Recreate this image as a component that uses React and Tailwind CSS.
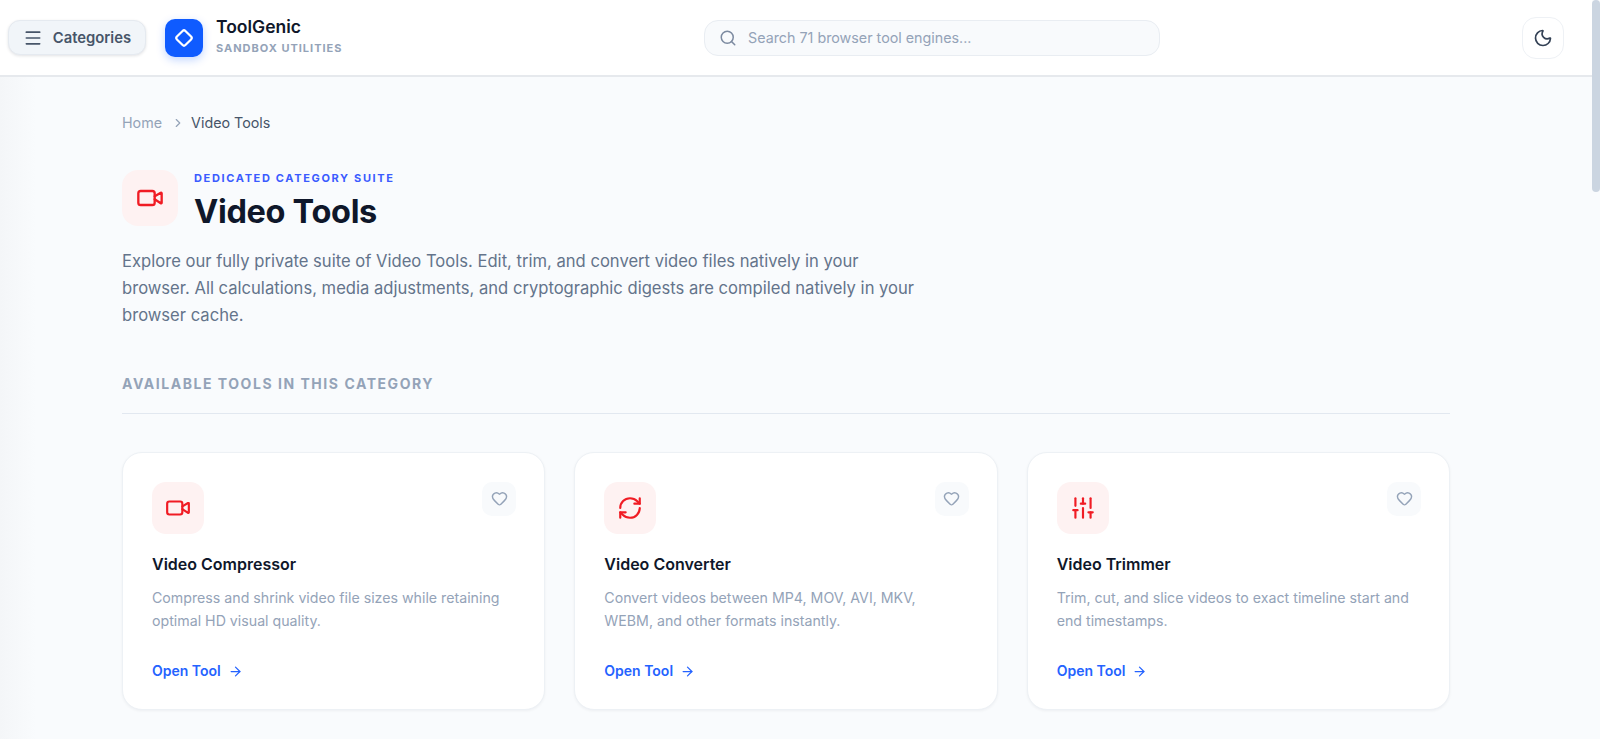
import { ArrowRight, ChevronRight, Heart, Menu, Moon, RefreshCw, Search, SlidersVertical, Video } from "lucide-react"

const tools = [
  {
    name: "Video Compressor",
    desc: "Compress and shrink video file sizes while retaining optimal HD visual quality.",
    icon: Video,
  },
  {
    name: "Video Converter",
    desc: "Convert videos between MP4, MOV, AVI, MKV, WEBM, and other formats instantly.",
    icon: RefreshCw,
  },
  {
    name: "Video Trimmer",
    desc: "Trim, cut, and slice videos to exact timeline start and end timestamps.",
    icon: SlidersVertical,
  },
]

function Header() {
  return (
    <header className="relative h-[77px] shrink-0 flex items-center bg-white pl-2 pr-7 border-b-2 border-[#e6e9ed]">
      <div className="flex items-center w-[696px]">
        <button className="h-[35px] w-[138px] flex items-center justify-center gap-[10px] rounded-xl bg-[#f1f5f9] border border-[#e5eaf0] shadow-[0_1px_3px_rgba(15,23,42,0.12)] text-[14.8px] leading-[22px] font-semibold text-[#475569]">
          <Menu size={20} strokeWidth={2} className="text-[#475569]" />
          <span className="pt-px">Categories</span>
        </button>
        <div className="ml-[19px] w-[38px] h-[38px] rounded-[10px] bg-[#0f5bff] shadow-[0_3px_8px_rgba(15,91,255,0.25)] flex items-center justify-center">
          <svg width="22" height="22" viewBox="0 0 22 22" fill="none" stroke="white" strokeWidth="2.2">
            <rect x="5" y="5" width="12" height="12" rx="2" transform="rotate(45 11 11)" />
          </svg>
        </div>
        <div className="ml-[13px] pb-1 flex flex-col">
          <span className="text-[17.5px] leading-[22px] font-semibold text-[#0f172a]">ToolGenic</span>
          <span className="mt-[3px] text-[11px] leading-[14px] font-bold tracking-[0.09em] text-[#94a3b8]">SANDBOX UTILITIES</span>
        </div>
      </div>
      <div className="w-[456px] h-[36px] flex items-center gap-[11px] px-[14px] rounded-[14px] bg-[#f8fafc] border border-[#e9edf2]">
        <Search size={18} className="text-[#7c8aa0]" />
        <span className="text-[14.3px] text-[#94a3b8]">Search 71 browser tool engines...</span>
      </div>
      <div className="flex-1 flex justify-end">
        <button className="w-[42px] h-[42px] rounded-[14px] bg-white border border-[#eef1f5] flex items-center justify-center text-[#334155]">
          <Moon size={20} />
        </button>
      </div>
    </header>
  )
}

function ToolCard({ tool }) {
  const Icon = tool.icon
  return (
    <div className="h-[258px] rounded-[20px] bg-white border border-[#edf1f5] shadow-[0_1px_3px_rgba(15,23,42,0.05)] pt-[29px] pl-[29px] pr-7 flex flex-col">
      <div className="flex justify-between items-start">
        <div className="w-[52px] h-[52px] rounded-[14px] bg-[#fef2f2] flex items-center justify-center text-[#f01c24]">
          <Icon size={26} strokeWidth={2} />
        </div>
        <div className="w-[34px] h-[34px] rounded-[10px] bg-[#f8fafc] flex items-center justify-center text-[#94a3b8]">
          <Heart size={17} />
        </div>
      </div>
      <h3 className="mt-[18px] text-[16px] leading-[24px] font-semibold text-[#0f172a]">{tool.name}</h3>
      <p className="mt-[10px] pr-2 text-[14.2px] leading-[23.8px] text-[#94a3b8]">{tool.desc}</p>
      <a className="mt-[28px] flex items-center gap-[7px] text-[14px] leading-[20px] font-semibold text-[#2563ff]">
        Open Tool
        <ArrowRight size={15} />
      </a>
    </div>
  )
}

export default function App() {
  return (
    <div className="h-[739px] w-full flex overflow-hidden bg-[#f9fbfd] font-['Inter',sans-serif]">
      <div className="flex-1 flex flex-col min-w-0">
        <Header />
        <main className="flex-1 pl-[122px] pr-[142px] bg-[linear-gradient(to_right,#f4f6f8,#f9fbfd_36px)]">
          <nav className="mt-[36px] flex items-center text-[14.3px] leading-5">
            <span className="text-[#94a3b8]">Home</span>
            <ChevronRight size={14} className="ml-[9px] mr-1.5 text-[#94a3b8]" />
            <span className="text-[#475569]">Video Tools</span>
          </nav>
          <div className="mt-[35px] h-[59px] flex items-center gap-4">
            <div className="w-[56px] h-[56px] rounded-2xl bg-[#fef2f2] flex items-center justify-center text-[#f01c24]">
              <Video size={28} strokeWidth={2} />
            </div>
            <div className="pt-[6px]">
              <div className="text-[11px] leading-[16px] font-bold tracking-[0.15em] text-[#3b5bff]">DEDICATED CATEGORY SUITE</div>
              <h1 className="mt-[6px] text-[32.5px] leading-[40px] font-bold tracking-[-0.01em] text-[#0f172a]">Video Tools</h1>
            </div>
          </div>
          <p className="mt-[21px] max-w-[798px] text-[16.6px] leading-[27.2px] text-[#64748b]">
            Explore our fully private suite of Video Tools. Edit, trim, and convert video files natively in your browser. All calculations, media adjustments, and cryptographic digests are compiled natively in your browser cache.
          </p>
          <div className="mt-[44px] pb-[19px] border-b border-[#e2e8f0] text-[14px] leading-[20px] font-bold tracking-[0.11em] text-[#94a3b8]">
            AVAILABLE TOOLS IN THIS CATEGORY
          </div>
          <div className="mt-[38px] grid grid-cols-3 gap-[29px]">
            {tools.map((t) => (
              <ToolCard key={t.name} tool={t} />
            ))}
          </div>
        </main>
      </div>
      <div className="w-2 shrink-0 bg-[#f9fbfd]">
        <div className="h-[192px] rounded-full bg-[#cbd5e1]" />
      </div>
    </div>
  )
}
